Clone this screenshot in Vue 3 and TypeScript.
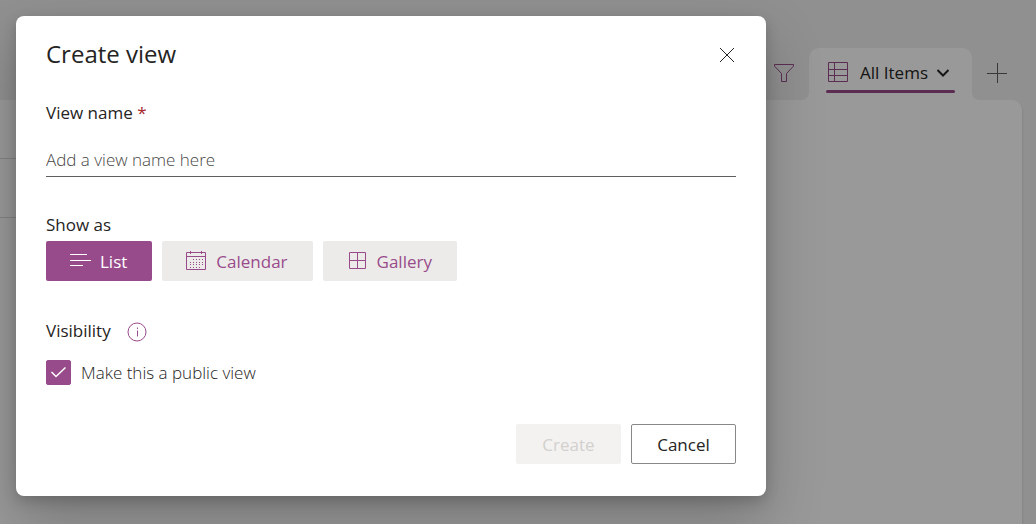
<script setup lang="ts">
import { ref } from 'vue'

type Layout = 'list' | 'calendar' | 'gallery'

const layouts: { id: Layout; label: string }[] = [
  { id: 'list', label: 'List' },
  { id: 'calendar', label: 'Calendar' },
  { id: 'gallery', label: 'Gallery' },
]
const selected = ref<Layout>('list')
const viewName = ref('')
const isPublic = ref(true)
</script>

<template>
  <div class="page">
    <main class="site">
      <nav class="views" aria-label="Views">
        <button class="tool" type="button" aria-label="Filter">
          <svg width="20" height="20" viewBox="0 0 20 20"><path d="M.5 .5h19v1.600L12.500 9.500v8h-5v-8L.5 2.100z" /></svg>
        </button>
        <button class="tab" type="button">
          <span class="tab-content">
            <svg class="grid-icon" width="20" height="20" viewBox="0 0 20 20"><path d="M.5-.5h19v19H.5zM6.500-.5v19M.5 6.500h19M.5 12.500h19" /></svg>
            <span>All Items</span>
            <svg class="chevron" width="14" height="10" viewBox="0 0 14 10"><path d="M1.500 2l5.500 5.500L12.500 2" /></svg>
          </span>
        </button>
        <button class="tool add" type="button" aria-label="Add view">
          <svg width="20" height="20" viewBox="0 0 20 20"><path d="M10.500 -1v20M0 9.500h20" /></svg>
        </button>
      </nav>
      <section class="panel">
        <div class="row"></div>
        <div class="row"></div>
      </section>
    </main>

    <div class="overlay">
      <form class="dialog" role="dialog" aria-modal="true" aria-labelledby="dialog-title" @submit.prevent>
        <header class="head">
          <h1 id="dialog-title">Create view</h1>
          <button class="close" type="button" aria-label="Close">
            <svg width="16" height="16" viewBox="0 0 16 16"><path d="M1 2l14 14M15 2L1 16" /></svg>
          </button>
        </header>

        <label class="label name-label" for="view-name">View name <span class="required">*</span></label>
        <input id="view-name" v-model="viewName" class="name" type="text" placeholder="Add a view name here" />

        <div id="show-as" class="label show-label">Show as</div>
        <div class="choices" role="group" aria-labelledby="show-as">
          <button
            v-for="item in layouts"
            :key="item.id"
            type="button"
            class="choice"
            :class="{ active: selected === item.id }"
            :aria-pressed="selected === item.id"
            @click="selected = item.id"
          >
            <svg v-if="item.id === 'list'" width="20" height="20" viewBox="0 0 20 20"><path d="M0 2.500h17M0 8.500h21M0 13.500h13" /></svg>
            <svg v-else-if="item.id === 'calendar'" width="20" height="20" viewBox="0 0 20 20">
              <path d="M.5 .5h19v17H.5zM.5 4.500h19M4.500 -1v3M15.500 -1v3" />
              <path class="dots" d="M7 7.500h10M4 10.500h13M4 12.500h13M4 15.500h10" />
            </svg>
            <svg v-else width="20" height="20" viewBox="0 0 20 20"><path d="M2.500 .5h16v16h-16zM10.500 .5v16M2.500 8.500h16" /></svg>
            <span>{{ item.label }}</span>
          </button>
        </div>

        <div class="visibility">
          <span class="label">Visibility</span>
          <button class="info" type="button" aria-label="About visibility">
            <svg width="20" height="20" viewBox="0 0 20 20"><circle cx="10" cy="11" r="9" /><path d="M10.500 9.500v6M10.500 6.500v1.500" /></svg>
          </button>
        </div>
        <label class="public">
          <span class="box">
            <input v-model="isPublic" type="checkbox" />
            <svg v-if="isPublic" width="25" height="25" viewBox="0 0 25 25"><path d="M5.500 12l4.500 4.500L19.500 7.500" /></svg>
          </span>
          <span class="public-text">Make this a public view</span>
        </label>

        <footer class="actions">
          <button class="action" type="submit" :disabled="!viewName">Create</button>
          <button class="action" type="button">Cancel</button>
        </footer>
      </form>
    </div>
  </div>
</template>

<style>
body {
  margin: 0;
}
</style>

<style scoped>
.page {
  position: relative;
  display: flex;
  min-height: 100vh;
  font-family: "Open Sans", "Noto Sans", sans-serif;
  font-size: 17px;
  line-height: 24px;
  color: #252423;
}
.page * {
  box-sizing: border-box;
}
button,
input {
  font: inherit;
  color: inherit;
  border-radius: 2px;
}
button {
  display: flex;
  align-items: center;
  justify-content: center;
  padding: 0;
  border: 0;
  background: none;
  white-space: nowrap;
}
svg {
  display: block;
  flex: none;
  overflow: visible;
  fill: none;
  stroke: currentColor;
}
.site {
  flex: 1;
  display: flex;
  flex-direction: column;
  padding-top: 48px;
  background: #f1f1f1;
}
.views {
  display: flex;
  justify-content: flex-end;
  padding-right: 29px;
}
.tool {
  width: 20px;
  height: 52px;
  color: #984b8b;
}
.add {
  color: #605e5c;
}
.tab {
  position: relative;
  height: 52px;
  margin: 0 15px;
  padding: 0 17px;
  border-radius: 10px 10px 0 0;
  background: #fff;
  font-weight: 500;
}
.tab::before,
.tab::after {
  content: "";
  position: absolute;
  bottom: 0;
  width: 8px;
  height: 8px;
}
.tab::before {
  right: 100%;
  background: radial-gradient(circle at 0 0, transparent 8px, #fff 8px);
}
.tab::after {
  left: 100%;
  background: radial-gradient(circle at 100% 0, transparent 8px, #fff 8px);
}
.tab-content {
  position: relative;
  display: flex;
  align-items: center;
  height: 100%;
  padding: 0 5px 2px 2px;
}
.tab-content::after {
  content: "";
  position: absolute;
  left: 0;
  right: 0;
  bottom: 7px;
  height: 3px;
  border-radius: 2px;
  background: #984b8b;
}
.grid-icon {
  margin-right: 12px;
  color: #984b8b;
}
.chevron {
  margin-left: 8px;
  stroke-width: 2;
}
.panel {
  flex: 1;
  margin-right: 14px;
  border-radius: 0 10px 0 0;
  background: #fff;
  box-shadow: 0 2px 3px rgba(0, 0, 0, 0.16);
}
.row {
  width: 60%;
  height: 59px;
  border-bottom: 1px solid #dcdcdc;
}
.overlay {
  position: absolute;
  inset: 0;
  display: flex;
  align-items: flex-start;
  padding: 16px;
  background: rgba(0, 0, 0, 0.4);
}
.dialog {
  width: 100%;
  max-width: 750px;
  padding: 22px 30px 32px;
  border-radius: 8px;
  background: #fff;
  box-shadow: 0 26px 58px rgba(0, 0, 0, 0.22), 0 5px 14px rgba(0, 0, 0, 0.18);
}
.head {
  display: flex;
  align-items: center;
  justify-content: space-between;
}
h1 {
  margin: 0;
  font-size: 24px;
  line-height: 32px;
  font-weight: 500;
}
.close {
  width: 18px;
  height: 32px;
}
.label {
  display: block;
  font-weight: 500;
}
.name-label {
  margin-top: 31px;
}
.required {
  color: #a4262c;
  font-weight: 400;
}
.name {
  display: block;
  width: 100%;
  height: 36px;
  margin-top: 16px;
  padding: 2px 0 0;
  border: 0;
  border-bottom: 1px solid #605e5c;
  border-radius: 0;
  background: none;
  outline: none;
  font-weight: 300;
}
.name::placeholder {
  color: #484644;
  opacity: 1;
}
.show-label {
  margin-top: 36px;
}
.choices {
  display: flex;
  gap: 10px;
  margin-top: 4px;
}
.choice {
  gap: 10px;
  height: 40px;
  padding: 2px 25px 0 24px;
  background: #edebe9;
  color: #984b8b;
  font-weight: 500;
}
.choice.active {
  background: #984b8b;
  color: #fff;
}
.dots {
  stroke-dasharray: 1 2;
}
.visibility {
  display: flex;
  align-items: center;
  gap: 16px;
  margin-top: 38px;
}
.info {
  height: 24px;
  color: #984b8b;
}
.public {
  display: flex;
  align-items: center;
  gap: 10px;
  margin-top: 16px;
  font-weight: 300;
}
.public-text {
  padding-top: 2px;
}
.box {
  position: relative;
  height: 25px;
}
.box input {
  display: block;
  appearance: none;
  width: 25px;
  height: 25px;
  margin: 0;
  border: 1px solid #605e5c;
}
.box input:checked {
  border-color: #984b8b;
  background: #984b8b;
}
.box svg {
  position: absolute;
  inset: 0;
  color: #fff;
  stroke-width: 1.500;
  pointer-events: none;
}
.actions {
  display: flex;
  justify-content: flex-end;
  gap: 10px;
  margin-top: 39px;
}
.action {
  min-width: 105px;
  height: 40px;
  padding: 2px 24px 0;
  border: 1px solid #8a8886;
  font-weight: 500;
}
.action:disabled {
  border-color: #f3f2f1;
  background: #f3f2f1;
  color: #d2d0ce;
}
</style>
